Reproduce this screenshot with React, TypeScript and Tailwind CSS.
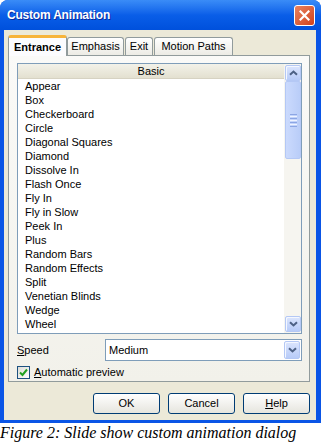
import React from 'react';

const EFFECTS = [
  'Appear',
  'Box',
  'Checkerboard',
  'Circle',
  'Diagonal Squares',
  'Diamond',
  'Dissolve In',
  'Flash Once',
  'Fly In',
  'Fly in Slow',
  'Peek In',
  'Plus',
  'Random Bars',
  'Random Effects',
  'Split',
  'Venetian Blinds',
  'Wedge',
  'Wheel'
];

const TABS = ['Entrance', 'Emphasis', 'Exit', 'Motion Paths'];

function Chevron({ down }: { down?: boolean }) {
  return (
    <svg width="9" height="6" viewBox="0 0 9 6">
      <path
        d={down ? 'M1 1.2l3.5 3.3L8 1.2' : 'M1 4.8l3.5-3.3L8 4.8'}
        stroke="#4d6185"
        strokeWidth="2"
        fill="none"
      />
    </svg>
  );
}

function XpButton({ down, className }: { down?: boolean; className: string }) {
  return (
    <div
      className={`${className} flex items-center justify-center rounded-[2px] border border-[#b4c8f5] bg-linear-to-b from-[#dbe5fd] to-[#b7cbf8] shadow-[inset_1px_1px_0_#f4f7ff]`}
    >
      <Chevron down={down} />
    </div>
  );
}

function Scrollbar() {
  return (
    <div className="flex w-[17px] flex-col bg-[#f6f5f0] p-px">
      <XpButton className="h-[16px] w-[16px]" />
      <div className="flex h-[78px] w-[16px] flex-col items-center justify-center gap-[1px] rounded-[2px] border border-[#b4c8f5] bg-linear-to-r from-[#cbdafd] to-[#b9cdf8]">
        <div className="h-px w-[7px] bg-[#8ca6e4]" />
        <div className="h-px w-[7px] bg-[#eef3ff]" />
        <div className="h-px w-[7px] bg-[#8ca6e4]" />
        <div className="h-px w-[7px] bg-[#eef3ff]" />
        <div className="h-px w-[7px] bg-[#8ca6e4]" />
        <div className="h-px w-[7px] bg-[#eef3ff]" />
        <div className="h-px w-[7px] bg-[#8ca6e4]" />
      </div>
      <div className="flex-1" />
      <XpButton down className="h-[16px] w-[16px]" />
    </div>
  );
}

function DialogButton({ label, mnemonic }: { label: string; mnemonic?: boolean }) {
  return (
    <button className="h-[21px] w-[67px] rounded-[3px] border border-[#003c74] bg-linear-to-b from-[#ffffff] to-[#e6e5de] text-[11px] text-black">
      {mnemonic ? (
        <>
          <span className="underline">{label[0]}</span>
          {label.slice(1)}
        </>
      ) : (
        label
      )}
    </button>
  );
}

export default function App() {
  return (
    <div className="h-[446px] w-[321px] overflow-hidden bg-white font-['Liberation_Sans',Arial,sans-serif] text-black">
      <div className="flex h-[423px] flex-col rounded-t-[8px] bg-[#0a55e6] pb-[3px] pl-[4px] pr-[5px]">
        {/* title bar */}
        <div className="-mx-[4px] -mr-[5px] flex h-[30px] items-center justify-between rounded-t-[8px] bg-linear-to-b from-[#3a8cf7] via-[#0a5ee8] to-[#0050dc] pl-[7px] pr-[6px]">
          <span className="text-[12px] font-bold tracking-[-0.2px] text-white [text-shadow:1px_1px_0_#0c2a9c]">
            Custom Animation
          </span>
          <div className="flex h-[21px] w-[21px] items-center justify-center rounded-[3px] border border-white bg-linear-to-br from-[#e9825f] to-[#cf3f17]">
            <svg width="11" height="11" viewBox="0 0 11 11">
              <path d="M1.5 1.5l8 8M9.5 1.5l-8 8" stroke="#fff" strokeWidth="2.2" strokeLinecap="square" />
            </svg>
          </div>
        </div>

        {/* body */}
        <div className="flex flex-1 flex-col bg-[#ece9d8] pl-[4px] pr-[6px] pt-[5px]">
          {/* tabs */}
          <div className="flex h-[20px] items-end">
            {TABS.map((tab, i) =>
              i === 0 ? (
                <div
                  key={tab}
                  className="relative z-10 -mb-px flex h-[21px] w-[59px] items-center justify-center rounded-t-[3px] border-x border-t-[3px] border-x-[#919b9c] border-t-[#f7b43a] bg-[#fcfcfe] text-[11px] font-bold"
                >
                  {tab}
                </div>
              ) : (
                <div
                  key={tab}
                  className={`flex h-[18px] items-center justify-center rounded-t-[3px] border-x border-t border-[#919b9c] bg-linear-to-b from-[#ffffff] to-[#ecebe5] text-[11px] ${
                    i === 1 ? 'w-[57px]' : i === 2 ? 'ml-px w-[28px]' : 'ml-px w-[79px]'
                  }`}
                >
                  {tab}
                </div>
              )
            )}
          </div>

          {/* tab page */}
          <div className="flex h-[327px] flex-col border border-[#919b9c] bg-linear-to-b from-[#fafaf8] to-[#f2f1ea] pl-[8px] pr-[7px] pt-[7px]">
            <div className="flex h-[271px] border border-[#7f9db9] bg-white">
              <div className="flex flex-1 flex-col">
                <div className="flex h-[15px] items-center justify-center border-b border-[#d6d2c2] bg-linear-to-b from-[#f3f2e9] to-[#e3e0d0] text-[11px]">
                  Basic
                </div>
                {EFFECTS.map(name => (
                  <div key={name} className="h-[14px] pl-[7px] text-[11px] leading-[14px]">
                    {name}
                  </div>
                ))}
              </div>
              <Scrollbar />
            </div>

            <div className="mt-[5px] flex h-[22px] items-center">
              <span className="w-[88px] text-[11px]">
                <span className="underline">S</span>peed
              </span>
              <div className="flex h-[22px] w-[197px] items-center border border-[#7f9db9] bg-white p-px">
                <span className="pl-[2px] text-[11px]">Medium</span>
                <XpButton down className="ml-auto h-[18px] w-[16px]" />
              </div>
            </div>

            <div className="mt-[3px] flex items-center gap-[4px]">
              <div className="flex h-[13px] w-[13px] items-center justify-center border border-[#1c5180] bg-linear-to-br from-[#dcdcd7] to-[#ffffff]">
                <svg width="9" height="9" viewBox="0 0 9 9">
                  <path d="M1 4.5l2.5 2.5L8 1.5" stroke="#21a121" strokeWidth="2" fill="none" />
                </svg>
              </div>
              <span className="text-[11px]">
                <span className="underline">A</span>utomatic preview
              </span>
            </div>
          </div>

          {/* buttons */}
          <div className="mt-[11px] flex justify-end gap-[8px]">
            <DialogButton label="OK" />
            <DialogButton label="Cancel" />
            <DialogButton label="Help" mnemonic />
          </div>
        </div>
      </div>

      <p className="font-['Liberation_Serif',serif] text-[16px] italic leading-[20px]">
        Figure 2: Slide show custom animation dialog
      </p>
    </div>
  );
}
